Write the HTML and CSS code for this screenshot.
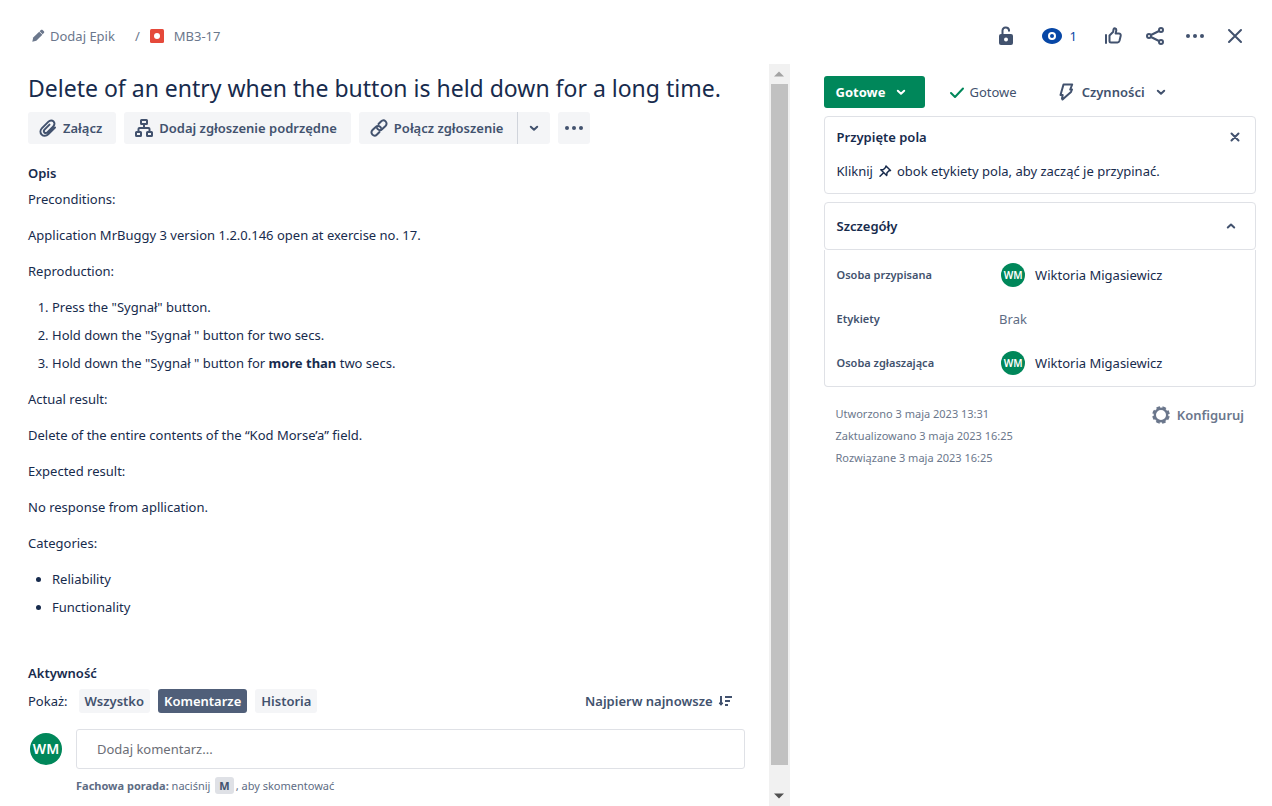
FILE: index.html
```html
<!DOCTYPE html>
<html lang="pl">
<head>
<meta charset="utf-8">
<title>MB3-17</title>
<link rel="stylesheet" href="styles.css">
</head>
<body>
<div class="issue">
  <header class="topbar">
    <nav class="crumbs">
      <button class="crumb epic" type="button">
        <svg width="16" height="16" viewBox="0 0 16 16" fill="currentColor"><path d="M3.200 9.600 9.200 3.700 12.400 6.800 6.300 12.800 2.300 13.800z"/><path d="M9.600 3.300l1.300-1.300c.5-.5 1.200-.5 1.700 0l1.300 1.300c.5.5.5 1.200 0 1.700l-1.300 1.300z"/></svg>
        Dodaj Epik
      </button>
      <span class="slash">/</span>
      <a class="crumb" href="#">
        <svg width="14" height="14" viewBox="0 0 14 14"><rect width="14" height="14" rx="1.500" fill="#e5493a"/><circle cx="7" cy="7" r="3" fill="#fff"/></svg>
        MB3-17
      </a>
    </nav>
    <div class="tools">
      <button class="tool lock" type="button" aria-label="Blokada">
        <svg width="24" height="24" viewBox="0 0 24 24"><rect x="5" y="10" width="14" height="11" rx="2" fill="currentColor"/><path d="M8.500 11V6.500a3.300 3.300 0 0 1 6.500-.5v1.500" fill="none" stroke="currentColor" stroke-width="2"/><circle cx="12" cy="15.500" r="2" fill="#fff"/></svg>
      </button>
      <button class="tool watch" type="button">
        <svg width="24" height="24" viewBox="0 0 24 24"><path d="M12 4c-5.500 0-10 4-10 8s4.500 8 10 8 10-4 10-8-4.500-8-10-8z" fill="currentColor"/><circle cx="12" cy="12" r="4" fill="#fff"/><circle cx="12" cy="12" r="2" fill="currentColor"/></svg>
        1
      </button>
      <button class="tool like" type="button" aria-label="Głosuj">
        <svg width="24" height="24" viewBox="0 0 24 24" fill="none" stroke="currentColor" stroke-width="2" stroke-linejoin="round"><path d="M5 11v8" stroke-linecap="round"/><path d="M8.500 11.500l3.500-3.500c.5-.6.200-2 .7-3 .6-1 2.600-.8 2.600 1 0 1.300-.5 2.300-.7 3.500h3.200c1.400 0 2.200 1 1.900 2.300l-1.200 5c-.3 1-1 1.700-2 1.700H10c-1 0-1.500-.6-1.500-1.500z"/></svg>
      </button>
      <button class="tool share" type="button" aria-label="Udostępnij">
        <svg width="24" height="24" viewBox="0 0 24 24" fill="none" stroke="currentColor" stroke-width="2"><circle cx="6" cy="12" r="2"/><circle cx="18" cy="6" r="2"/><circle cx="18" cy="18" r="2"/><path d="M8 11l8-4M8 13l8 4"/></svg>
      </button>
      <button class="tool more" type="button" aria-label="Więcej">
        <svg width="24" height="24" viewBox="0 0 24 24" fill="currentColor"><circle cx="5" cy="12" r="2"/><circle cx="12" cy="12" r="2"/><circle cx="19" cy="12" r="2"/></svg>
      </button>
      <button class="tool" type="button" aria-label="Zamknij">
        <svg width="24" height="24" viewBox="0 0 24 24" fill="none" stroke="currentColor" stroke-width="2" stroke-linecap="round"><path d="M6 6l12 12M18 6L6 18"/></svg>
      </button>
    </div>
  </header>

  <div class="columns">
    <main class="content">
      <h1 class="title">Delete of an entry when the button is held down for a long time.</h1>
      <div class="actions">
        <button class="btn" type="button">
          <svg width="24" height="24" viewBox="0 0 24 24" fill="none" stroke="currentColor" stroke-width="2" stroke-linecap="round"><path d="M19 11.500l-6.800 6.800c-2 2-4.800 2-6.500.3s-1.700-4.500.3-6.500l6.500-6.500c1.500-1.500 3.700-1.500 5-.2s1.300 3.500-.2 5l-6 6c-.9.9-2.100.9-2.900.1s-.8-2 .1-2.900l5-5"/></svg>
          Załącz
        </button>
        <button class="btn" type="button">
          <svg width="24" height="24" viewBox="0 0 24 24" fill="none" stroke="currentColor" stroke-width="2"><rect x="9" y="4" width="6" height="4" rx=".5"/><rect x="4" y="16" width="5" height="4" rx=".5"/><rect x="15" y="16" width="5" height="4" rx=".5"/><path d="M12 8v4M6.500 16v-3q0-1 1-1h9q1 0 1 1v3"/></svg>
          Dodaj zgłoszenie podrzędne
        </button>
        <div class="split">
          <button class="btn" type="button">
            <svg width="24" height="24" viewBox="0 0 24 24" fill="none" stroke="currentColor" stroke-width="2" stroke-linecap="round"><path d="M11.500 8l2.500-2.500c1.400-1.400 3.300-1.400 4.600-.1s1.300 3.200-.1 4.600L15.300 13c-1.400 1.400-3.300 1.400-4.600.1q-.5-.5-.7-1.100"/><path d="M12.500 16L10 18.500c-1.400 1.400-3.300 1.400-4.600.1S4.100 15.400 5.500 14L8.700 11c1.400-1.400 3.300-1.400 4.600-.1q.5.500.7 1.100"/></svg>
            Połącz zgłoszenie
          </button>
          <button class="btn drop" type="button" aria-label="Więcej opcji">
            <svg width="16" height="16" viewBox="0 0 16 16" class="chev"><path d="M4.800 6.700 8 9.700l3.200-3"/></svg>
          </button>
        </div>
        <button class="btn square" type="button" aria-label="Więcej">
          <svg width="24" height="24" viewBox="0 0 24 24" fill="currentColor"><circle cx="5" cy="12" r="2"/><circle cx="12" cy="12" r="2"/><circle cx="19" cy="12" r="2"/></svg>
        </button>
      </div>

      <section class="description">
        <h2 class="label">Opis</h2>
        <div class="prose">
          <p>Preconditions:</p>
          <p>Application MrBuggy 3 version 1.2.0.146 open at exercise no. 17.</p>
          <p>Reproduction:</p>
          <ol>
            <li>Press the "Sygnał" button.</li>
            <li>Hold down the "Sygnał " button for two secs.</li>
            <li>Hold down the "Sygnał " button for <strong>more than</strong> two secs.</li>
          </ol>
          <p>Actual result:</p>
          <p>Delete of the entire contents of the “Kod Morse’a” field.</p>
          <p>Expected result:</p>
          <p>No response from apllication.</p>
          <p>Categories:</p>
          <ul>
            <li>Reliability</li>
            <li>Functionality</li>
          </ul>
        </div>
      </section>

      <section class="activity">
        <h2 class="label">Aktywność</h2>
        <div class="filters">
          <span class="show">Pokaż:</span>
          <button class="chip" type="button">Wszystko</button>
          <button class="chip selected" type="button">Komentarze</button>
          <button class="chip" type="button">Historia</button>
          <button class="sort" type="button">Najpierw najnowsze
            <svg width="16" height="16" viewBox="0 0 16 16" fill="none" stroke="currentColor" stroke-width="2"><path d="M4 3v9"/><path d="M2 10 4 12.300 6 10z" fill="currentColor" stroke-width="1"/><path d="M8 4h7M8 8h5M8 12h3"/></svg>
          </button>
        </div>
        <div class="comment">
          <span class="avatar large">WM</span>
          <input class="field" type="text" placeholder="Dodaj komentarz..." aria-label="Dodaj komentarz">
          <p class="tip"><strong>Fachowa porada:</strong> naciśnij <kbd>M</kbd>, aby skomentować</p>
        </div>
      </section>
    </main>

    <div class="scrollbar" aria-hidden="true">
      <span class="arrow"><svg width="10" height="6" viewBox="0 0 10 6" fill="#a3a3a3"><path d="M0 5.500 5 .5l5 5z"/></svg></span>
      <div class="track"><div class="thumb"></div></div>
      <span class="arrow"><svg width="10" height="6" viewBox="0 0 10 6" fill="#505050"><path d="M0 .5l5 5 5-5z"/></svg></span>
    </div>

    <aside class="side">
      <div class="status">
        <button class="state" type="button">Gotowe
          <svg width="16" height="16" viewBox="0 0 16 16" class="chev"><path d="M4.800 6.700 8 9.700l3.200-3"/></svg>
        </button>
        <span class="done">
          <svg width="16" height="16" viewBox="0 0 16 16" fill="none" stroke="#00875a" stroke-width="2" stroke-linecap="round" stroke-linejoin="round"><path d="M2 9l4 4L14 4.500"/></svg>
          Gotowe
        </span>
        <button class="automation" type="button">
          <svg width="24" height="24" viewBox="0 0 24 24" fill="none" stroke="currentColor" stroke-width="2" stroke-linejoin="round"><path d="M9.500 4.500h8.700l-2 5H18l-1 2.500-8.500 7.500-.5-1 .7-3.500H6.500z"/></svg>
          Czynności
          <svg width="16" height="16" viewBox="0 0 16 16" class="chev"><path d="M4.800 6.700 8 9.700l3.200-3"/></svg>
        </button>
      </div>

      <section class="card pinned">
        <div class="cardrow">
          <h2 class="label">Przypięte pola</h2>
          <button class="tool" type="button" aria-label="Zamknij">
            <svg width="16" height="16" viewBox="0 0 16 16" fill="none" stroke="currentColor" stroke-width="2" stroke-linecap="round"><path d="M4.500 4.500l7 7M11.500 4.500l-7 7"/></svg>
          </button>
        </div>
        <p class="hint">Kliknij
          <svg width="16" height="16" viewBox="0 0 16 16" fill="none" stroke="currentColor" stroke-width="1.500" stroke-linejoin="round" stroke-linecap="round"><path d="M9 3l4.500 4.500-1.500.3-2 2-.3 2.700L3.800 6.800l2.700-.3 2-2z"/><path d="M6.300 10 3 13.300"/></svg>
          obok etykiety pola, aby zacząć je przypinać.</p>
      </section>

      <section class="details">
        <button class="card toggle" type="button">Szczegóły
          <svg width="16" height="16" viewBox="0 0 16 16" class="chev"><path d="M4.800 9.500 8 6.500l3.200 3"/></svg>
        </button>
        <dl class="fields">
          <dt>Osoba przypisana</dt>
          <dd><span class="avatar">WM</span>Wiktoria Migasiewicz</dd>
          <dt>Etykiety</dt>
          <dd class="none">Brak</dd>
          <dt>Osoba zgłaszająca</dt>
          <dd><span class="avatar">WM</span>Wiktoria Migasiewicz</dd>
        </dl>
      </section>

      <footer class="meta">
        <div class="dates">
          <p>Utworzono 3 maja 2023 13:31</p>
          <p>Zaktualizowano 3 maja 2023 16:25</p>
          <p>Rozwiązane 3 maja 2023 16:25</p>
        </div>
        <button class="configure" type="button">
          <svg width="20" height="20" viewBox="0 0 20 20" fill="none" stroke="currentColor"><circle cx="10" cy="10" r="6.200" stroke-width="2.400"/><circle cx="10" cy="10" r="7.600" stroke-width="2.400" stroke-dasharray="3.600 2.369" stroke-dashoffset="-1.200"/></svg>
          Konfiguruj
        </button>
      </footer>
    </aside>
  </div>
</div>
</body>
</html>
```
FILE: styles.css
```css
* { box-sizing: border-box; }

body {
  margin: 0;
  background: #fff;
  color: #172b4d;
  font-family: "Noto Sans", "Open Sans", sans-serif;
  font-size: 13px;
  line-height: 20px;
}

h1, h2, p, ol, ul, dl, dd { margin: 0; padding: 0; }
svg { display: block; flex: none; }

button {
  display: inline-flex;
  align-items: center;
  margin: 0;
  padding: 0;
  border: 0;
  background: none;
  color: #42526e;
  font: inherit;
  font-weight: 600;
  white-space: nowrap;
  cursor: pointer;
}

.chev { fill: none; stroke: currentColor; stroke-width: 2; stroke-linecap: round; stroke-linejoin: round; }

.issue { display: flex; flex-direction: column; min-height: 100vh; }

/* Top bar */
.topbar {
  display: flex;
  justify-content: space-between;
  align-items: center;
  padding: 20px 25px 12px 30px;
}
.crumbs { display: flex; align-items: center; }
.crumb {
  display: inline-flex;
  align-items: center;
  gap: 10px;
  color: #6b778c;
  font-weight: 400;
  text-decoration: none;
}
.epic { gap: 4px; }
.slash { margin: 0 10px 0 20px; color: #6b778c; }
.tools { display: flex; align-items: center; height: 32px; }
.tool { color: #42526e; }
.lock { margin-right: 22px; }
.watch { gap: 6px; margin-right: 24px; color: #0747a6; font-weight: 400; }
.like { margin-right: 18px; }
.share, .more { margin-right: 16px; }

.columns { display: flex; flex: 1; }

/* Main column */
.content { flex: 1; min-width: 0; padding: 10px 24px 10px 28px; }
.title { font-size: 23px; font-weight: 400; line-height: 28px; }
.actions { display: flex; gap: 8px; margin-top: 10px; }
.btn {
  height: 32px;
  gap: 3px;
  padding: 0 14px 0 8px;
  border-radius: 3px;
  background: #f4f5f7;
}
.split { display: flex; }
.split .btn:first-child { border-radius: 3px 0 0 3px; }
.split .drop {
  padding: 0 8px;
  border-left: 1px solid #d0d4db;
  border-radius: 0 3px 3px 0;
}
.square { padding: 0 4px; }

.label { font-size: 13px; font-weight: 600; line-height: 20px; }
.description { margin-top: 19px; }
.prose { margin-top: 4px; line-height: 24px; }
.prose > * + * { margin-top: 12px; }
.prose ol, .prose ul { padding-left: 24px; }
.prose li + li { margin-top: 4px; }
.prose strong { font-weight: 700; }

.activity { margin-top: 44px; }
.filters { display: flex; align-items: center; gap: 8px; margin-top: 6px; }
.show { margin-right: 3px; }
.chip { height: 24px; padding: 0 6px; border-radius: 3px; background: #f4f5f7; }
.selected { background: #505f79; color: #fff; }
.sort { gap: 4px; margin-left: auto; margin-right: 12px; }

.comment {
  display: grid;
  grid-template-columns: 36px 1fr;
  column-gap: 12px;
  row-gap: 7px;
  align-items: center;
  margin-top: 16px;
}
.field {
  width: 100%;
  height: 40px;
  padding: 0 20px;
  border: 1px solid #dfe1e6;
  border-radius: 3px;
  background: #fff;
  color: #172b4d;
  font: inherit;
}
.field::placeholder { color: #6b6e76; opacity: 1; }
.tip { grid-column: 2; color: #5e6c84; font-size: 11px; }
.tip kbd {
  margin: 0 2px;
  padding: 1px 4px;
  border-radius: 3px;
  background: #dfe1e6;
  color: #42526e;
  font: inherit;
  font-weight: 700;
}

.avatar {
  display: inline-flex;
  justify-content: center;
  align-items: center;
  width: 24px;
  height: 24px;
  border-radius: 50%;
  background: #00875a;
  color: #fff;
  font-size: 10px;
  font-weight: 600;
}
.large { justify-self: center; width: 32px; height: 32px; font-size: 14px; }

/* Scrollbar */
.scrollbar { display: flex; flex-direction: column; width: 21px; background: #f1f1f1; }
.arrow { display: flex; justify-content: center; align-items: center; height: 20px; }
.track { flex: 1; padding: 0 2px; }
.thumb { height: 97%; background: #c1c1c1; }

/* Side column */
.side { width: 34%; margin: 12px 16px 0 34px; }
.status { display: flex; align-items: center; }
.state {
  height: 32px;
  gap: 8px;
  padding: 0 16px 0 12px;
  border-radius: 3px;
  background: #00875a;
  color: #fff;
  font-weight: 700;
}
.done { display: flex; align-items: center; gap: 4px; margin-left: 24px; color: #42526e; }
.automation { gap: 4px; margin-left: 37px; }
.automation .chev { margin-left: 4px; }

.card { border: 1px solid #dfe1e6; border-radius: 4px; }
.pinned { margin-top: 8px; padding: 10px 12px 12px; }
.cardrow { display: flex; justify-content: space-between; align-items: center; }
.hint { display: flex; align-items: center; gap: 4px; margin-top: 14px; }
.details { margin-top: 8px; }
.toggle {
  display: flex;
  justify-content: space-between;
  width: 100%;
  height: 48px;
  padding: 0 16px 0 12px;
  color: #172b4d;
}
.toggle .chev { color: #42526e; }
.fields {
  display: grid;
  grid-template-columns: 40% 1fr;
  row-gap: 20px;
  align-items: center;
  padding: 13px 12px 11px;
  border: 1px solid #dfe1e6;
  border-top: 0;
  border-radius: 0 0 4px 4px;
}
.fields dt { color: #42526e; font-size: 11px; font-weight: 600; }
.fields dd { display: flex; align-items: center; gap: 10px; height: 24px; }
.fields .avatar { margin-left: 2px; }
.fields .none { color: #5e6c84; }

.meta { display: flex; justify-content: space-between; align-items: flex-start; padding: 16px 12px; }
.dates { color: #6b778c; font-size: 11px; line-height: 22px; }
.configure { gap: 6px; height: 24px; color: #6b778c; }
```
